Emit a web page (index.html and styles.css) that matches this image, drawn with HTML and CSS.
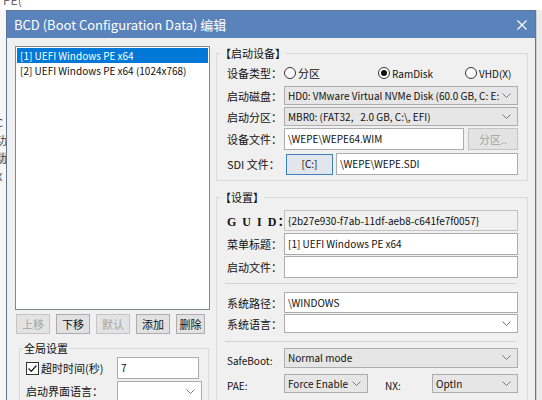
FILE: index.html
```html
<!DOCTYPE html>
<html>
<head>
<meta charset="utf-8">
<link rel="stylesheet" href="styles.css">
</head>
<body>
<div class="screen">
  <div class="desk-top"><span>PE(</span></div>
  <div class="desk-row">
    <div class="desk-left">
      <span class="frag f1">C</span>
      <span class="frag f2">功</span>
      <span class="frag f3">功</span>
      <span class="frag f4">X</span>
    </div>
    <div class="dialog">
      <div class="titlebar">
        <span class="title">BCD (Boot Configuration Data) 编辑</span>
        <svg class="close" width="10" height="10" viewBox="0 0 10 10"><path d="M0.5 0.5 L9.5 9.5 M9.5 0.5 L0.5 9.5" stroke="#fff" stroke-width="1.2" fill="none"/></svg>
      </div>
      <div class="dlg-body">
        <div class="left-col">
          <div class="list">
            <div class="item sel">[1] UEFI Windows PE x64</div>
            <div class="item">[2] UEFI Windows PE x64 (1024x768)</div>
          </div>
          <div class="btnrow">
            <div class="btn dis">上移</div>
            <div class="btn">下移</div>
            <div class="btn dis">默认</div>
            <div class="btn">添加</div>
            <div class="btn narrow">删除</div>
          </div>
          <fieldset class="group global">
            <legend>全局设置</legend>
            <div class="grow">
              <label class="chk"><span class="box"><svg width="11" height="11" viewBox="0 0 11 11"><path d="M1.5 5.5 L4.3 8.3 L9.5 2.5" stroke="#222" stroke-width="1.3" fill="none"/></svg></span>超时时间(秒)</label>
              <div class="input gin lt">7</div>
            </div>
            <div class="grow r2">
              <span class="glbl">启动界面语言：</span>
              <div class="select white gsel"><svg class="chev" width="9" height="5" viewBox="0 0 9 5"><path d="M0.5 0.5 L4.5 4.5 L8.5 0.5" fill="none" stroke="#777"/></svg></div>
            </div>
          </fieldset>
        </div>
        <div class="right-col">
          <fieldset class="group g1">
            <legend class="blg">【启动设备】</legend>
            <div class="row r-radio">
              <span class="lbl">设备类型：</span>
              <span class="radio w1"><span class="circ"></span>分区</span>
              <span class="radio w2"><span class="circ on"></span><span class="lt">RamDisk</span></span>
              <span class="radio"><span class="circ"></span><span class="lt">VHD(X)</span></span>
            </div>
            <div class="row r-sel1">
              <span class="lbl">启动磁盘：</span>
              <div class="select"><span class="lt">HD0: VMware Virtual NVMe Disk (60.0 GB, C: E:</span><svg class="chev" width="9" height="5" viewBox="0 0 9 5"><path d="M0.5 0.5 L4.5 4.5 L8.5 0.5" fill="none" stroke="#777"/></svg></div>
            </div>
            <div class="row r-sel2">
              <span class="lbl">启动分区：</span>
              <div class="select"><span class="lt">MBR0: (FAT32,&nbsp;&nbsp; 2.0 GB, C:\, EFI)</span><svg class="chev" width="9" height="5" viewBox="0 0 9 5"><path d="M0.5 0.5 L4.5 4.5 L8.5 0.5" fill="none" stroke="#777"/></svg></div>
            </div>
            <div class="row r-in1">
              <span class="lbl">设备文件：</span>
              <div class="input wim lt">\WEPE\WEPE64.WIM</div>
              <div class="btn dis part">分区..</div>
            </div>
            <div class="row r-in2">
              <span class="lbl">SDI 文件：</span>
              <div class="btn cbtn lt">[C:]</div>
              <div class="input sdi lt">\WEPE\WEPE.SDI</div>
            </div>
          </fieldset>
          <fieldset class="group g2">
            <legend class="blg">【设置】</legend>
            <div class="row r-guid">
              <span class="lbl guid">G U I D：</span>
              <div class="input ro lt">{2b27e930-f7ab-11df-aeb8-c641fe7f0057}</div>
            </div>
            <div class="row r-menu">
              <span class="lbl">菜单标题：</span>
              <div class="input lt">[1] UEFI Windows PE x64</div>
            </div>
            <div class="row r-file">
              <span class="lbl">启动文件：</span>
              <div class="input"></div>
            </div>
            <div class="sep s1"></div>
            <div class="row r-path">
              <span class="lbl">系统路径：</span>
              <div class="input lt">\WINDOWS</div>
            </div>
            <div class="row r-lang">
              <span class="lbl">系统语言：</span>
              <div class="select white"><svg class="chev" width="9" height="5" viewBox="0 0 9 5"><path d="M0.5 0.5 L4.5 4.5 L8.5 0.5" fill="none" stroke="#777"/></svg></div>
            </div>
            <div class="sep s2"></div>
            <div class="row r-safe">
              <span class="lbl lt">SafeBoot:</span>
              <div class="select"><span class="lt">Normal mode</span><svg class="chev" width="9" height="5" viewBox="0 0 9 5"><path d="M0.5 0.5 L4.5 4.5 L8.5 0.5" fill="none" stroke="#777"/></svg></div>
            </div>
            <div class="row r-pae">
              <span class="lbl lt">PAE:</span>
              <div class="select pae"><span class="lt">Force Enable</span><svg class="chev" width="9" height="5" viewBox="0 0 9 5"><path d="M0.5 0.5 L4.5 4.5 L8.5 0.5" fill="none" stroke="#777"/></svg></div>
              <span class="nxl lt">NX:</span>
              <div class="select"><span class="lt">OptIn</span><svg class="chev" width="9" height="5" viewBox="0 0 9 5"><path d="M0.5 0.5 L4.5 4.5 L8.5 0.5" fill="none" stroke="#777"/></svg></div>
            </div>
          </fieldset>
        </div>
      </div>
    </div>
    <div class="desk-right"></div>
  </div>
</div>
</body>
</html>
```

FILE: styles.css
```css
* { box-sizing: border-box; }
body {
  margin: 0;
  font-family: "Noto Sans CJK SC", "Noto Sans", sans-serif;
  font-size: 11px;
  color: #111;
}
.lt { font-size: 10px; }
.screen {
  width: 542px;
  height: 400px;
  overflow: hidden;
  background: #f4f4f4;
}
.desk-top {
  height: 10px;
  overflow: hidden;
  background: #fff;
  padding-left: 3px;
  color: #666;
}
.desk-top span {
  display: block;
  margin-top: -7px;
  font-size: 12px;
  line-height: 14px;
}
.desk-row {
  display: flex;
  height: 390px;
}
.desk-left {
  width: 6px;
  flex: none;
  background: #f6f6f6;
  overflow: hidden;
  display: flex;
  flex-direction: column;
}
.frag {
  display: block;
  font-size: 11px;
  line-height: 12px;
  margin-left: -4px;
  color: #444;
}
.f1 { margin-top: 106px; }
.f2 { margin-top: 6px; }
.f3 { margin-top: 6px; background: #d8d8d8; }
.f4 { margin-top: 6px; }
.dialog {
  width: 530px;
  flex: none;
  border: 1px solid #5f7595;
  border-bottom: none;
  background: #f0f0f0;
  display: flex;
  flex-direction: column;
  overflow: hidden;
}
.desk-right {
  flex: 1;
  background: #ececec;
  border-left: 1px solid #d0d0d0;
}
.titlebar {
  flex: none;
  height: 27px;
  background: #5a83bb;
  color: #fff;
  display: flex;
  align-items: center;
  justify-content: space-between;
  padding: 0 8px 0 7px;
}
.title {
  font-size: 13px;
  line-height: 16px;
}
.dlg-body {
  flex: none;
  display: flex;
  gap: 6px;
  padding: 8px 7px 0 8px;
}
.left-col {
  width: 195px;
  flex: none;
  display: flex;
  flex-direction: column;
}
.list {
  flex: none;
  height: 264px;
  background: #fff;
  border: 1px solid #828790;
  padding: 1px;
}
.item {
  height: 15px;
  line-height: 15px;
  padding-left: 3px;
  white-space: nowrap;
  font-size: 10px;
}
.item.sel {
  background: #0078d7;
  color: #fff;
}
.btnrow {
  display: flex;
  gap: 6px;
  margin-top: 4px;
  padding-left: 1px;
}
.btn {
  flex: none;
  height: 20px;
  width: 34px;
  border: 1px solid #adadad;
  background: #e1e1e1;
  display: flex;
  align-items: center;
  justify-content: center;
  line-height: 14px;
  white-space: nowrap;
}
.btn.narrow { width: 29px; }
.btn.dis {
  color: #a3a3a3;
  border-color: #c4c4c4;
  background: #e3e3e3;
}
.group {
  margin: 0;
  border: 1px solid #d9d9d9;
  min-inline-size: 0;
}
.group legend {
  padding: 0;
  line-height: 14px;
  font-size: 11px;
}
.global {
  flex: none;
  margin-top: 7px;
  margin-left: 4px;
  width: 190px;
  padding: 0 6px 10px 6px;
}
.global legend { margin-left: -3px; padding: 0 1px; }
.grow {
  display: flex;
  align-items: center;
  margin-top: 2px;
}
.chk {
  width: 91px;
  flex: none;
  display: flex;
  align-items: center;
  gap: 2px;
  white-space: nowrap;
}
.box {
  width: 13px;
  height: 13px;
  flex: none;
  border: 1px solid #333;
  background: #fff;
  display: flex;
  align-items: center;
  justify-content: center;
}
.glbl { width: 91px; flex: none; white-space: nowrap; }
.input {
  height: 22px;
  border: 1px solid #acacac;
  background: #fff;
  padding-left: 3px;
  display: flex;
  align-items: center;
  flex: 1;
  min-width: 0;
  white-space: nowrap;
  overflow: hidden;
  line-height: 14px;
}
.gin { flex: none; width: 82px; }
.gsel { flex: none; width: 82px; }
.select {
  height: 20px;
  border: 1px solid #adadad;
  background: #e6e6e6;
  padding: 0 6px 0 3px;
  display: flex;
  align-items: center;
  flex: 1;
  min-width: 0;
  white-space: nowrap;
  overflow: hidden;
  line-height: 14px;
}
.select.white { background: #fff; }
.chev { margin-left: auto; flex: none; }
.right-col {
  width: 312px;
  flex: none;
  display: flex;
  flex-direction: column;
}
.g1, .g2 { padding: 0 9px 0 10px; flex: none; }
.g1 { padding-bottom: 5px; }
.g2 { margin-top: 9px; padding-bottom: 20px; }
.blg { margin-left: -7px; }
.row {
  display: flex;
  align-items: center;
}
.lbl {
  width: 57px;
  flex: none;
  white-space: nowrap;
}
.lbl.guid {
  font-family: "Liberation Serif", "Noto Sans CJK SC", serif;
  font-weight: bold;
  font-size: 12px;
  letter-spacing: 1.5px;
}
.r-radio { height: 20px; margin-top: 3px; }
.radio {
  display: flex;
  align-items: center;
  gap: 2px;
  white-space: nowrap;
  flex: none;
}
.radio.w1 { width: 94px; }
.radio.w2 { width: 87px; }
.circ {
  width: 12px;
  height: 12px;
  flex: none;
  border: 1px solid #333;
  border-radius: 50%;
  background: #fff;
  display: flex;
  align-items: center;
  justify-content: center;
}
.circ.on::after {
  content: "";
  width: 6px;
  height: 6px;
  border-radius: 50%;
  background: #111;
}
.r-sel1 { margin-top: 3px; }
.r-sel1 .select, .r-sel2 .select { height: 19px; }
.r-sel2 { margin-top: 2px; }
.r-in1 { margin-top: 2px; }
.wim { flex: none; width: 180px; }
.part { width: 50px; height: 22px; margin-left: 4px; }
.r-in2 { margin-top: 3px; }
.cbtn {
  width: 47px;
  height: 21px;
  margin-left: 2px;
  border-color: #3d80c0;
  background: #e1e6ec;
}
.sdi { margin-left: 3px; }
.r-guid { margin-top: 6px; }
.r-guid .input { height: 21px; }
.input.ro { background: #f0f0f0; border-color: #c3c3c3; }
.r-menu { margin-top: 2px; }
.r-file { margin-top: 1px; }
.sep {
  height: 1px;
  background: #d4d4d4;
  margin-left: -2px;
  margin-right: 2px;
}
.s1 { margin-top: 5px; margin-bottom: 8px; }
.r-path .input { height: 21px; }
.r-lang { margin-top: 1px; }
.r-lang .select { height: 19px; }
.s2 { margin-top: 8px; margin-bottom: 5px; }
.r-safe .lbl { padding-top: 6px; }
.r-pae { margin-top: 6px; }
.r-pae .select { height: 19px; }
.r-pae .lbl, .nxl { padding-top: 4px; }
.pae { flex: none; width: 84px; }
.nxl { width: 47px; margin-left: 17px; flex: none; }
```
